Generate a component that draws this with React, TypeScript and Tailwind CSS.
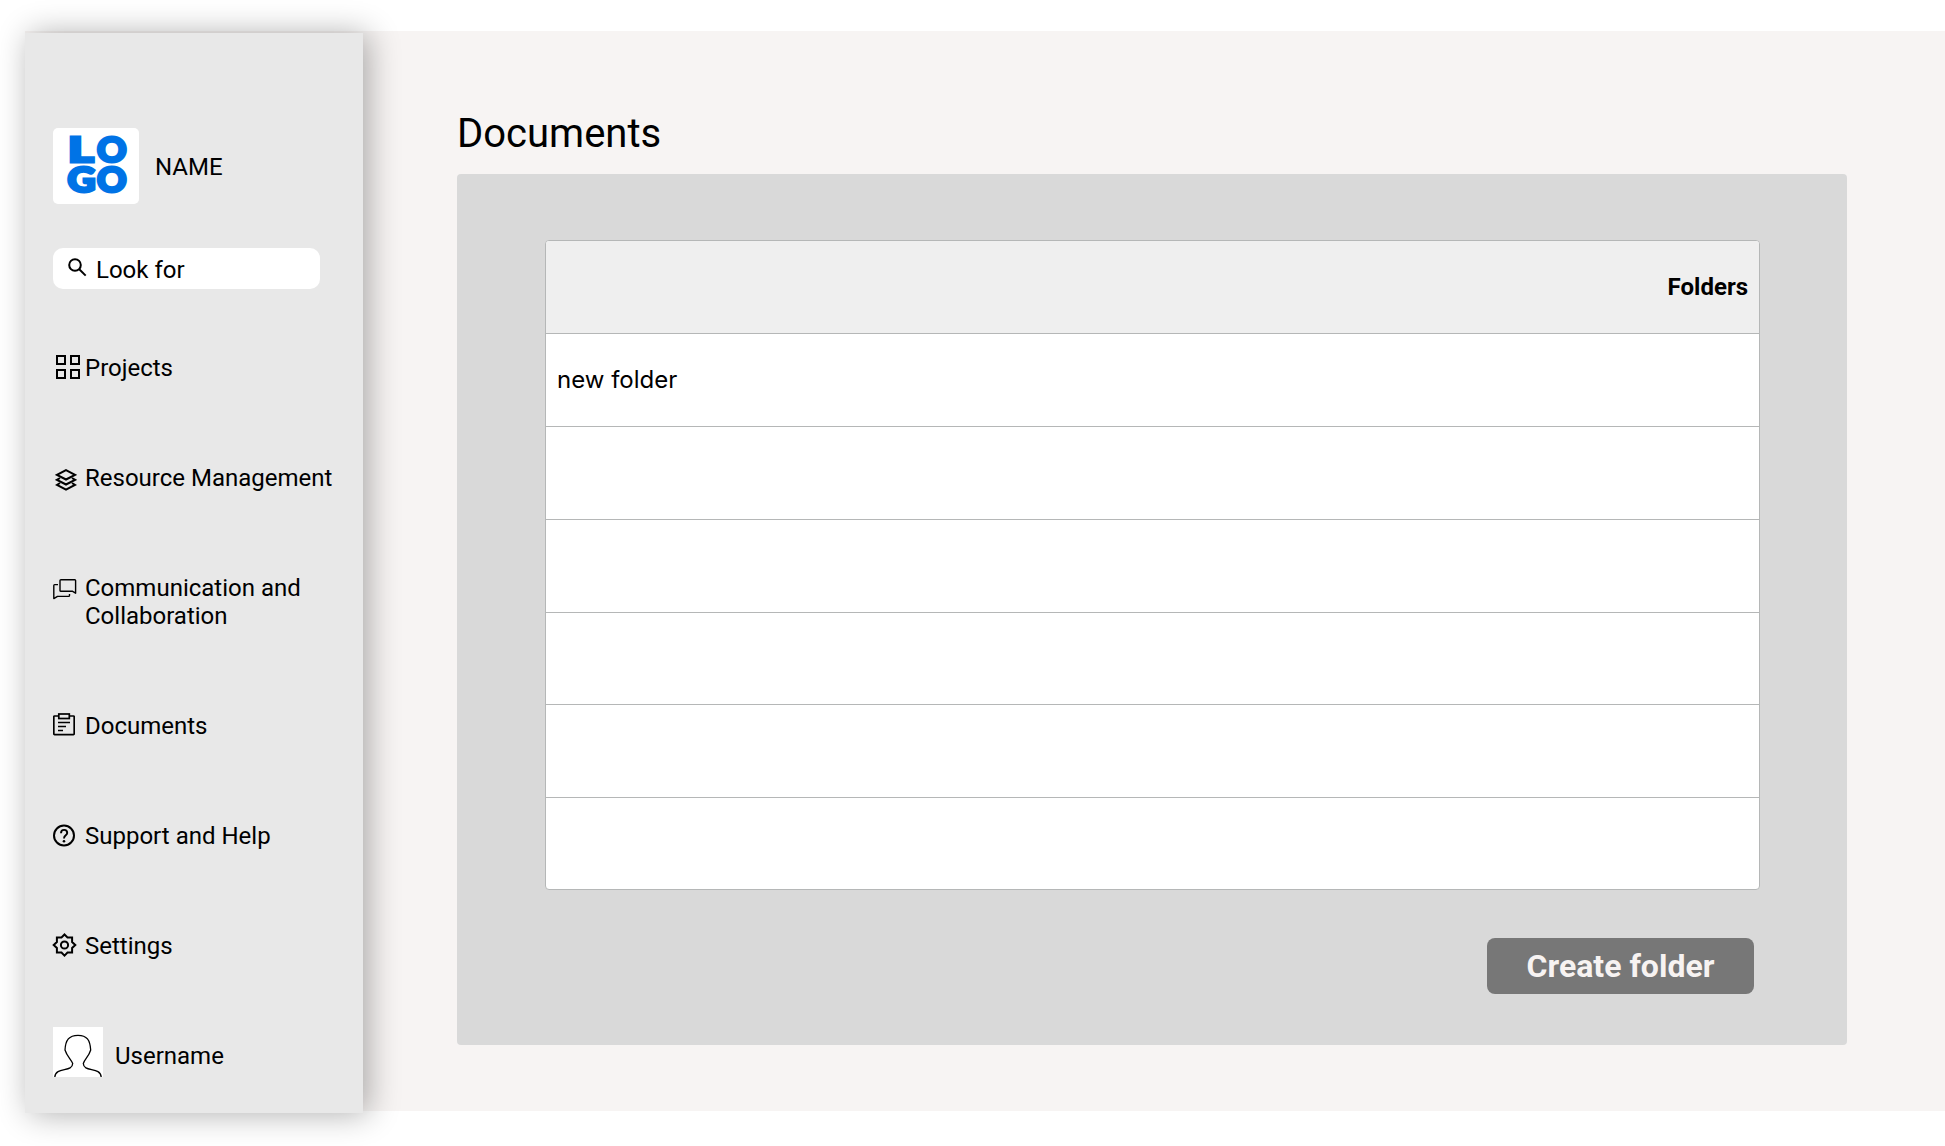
import React from "react";

type IconProps = { className?: string };

const GridIcon = ({ className }: IconProps) => (
  <svg className={className} width="24" height="24" viewBox="0 0 24 24" fill="none" stroke="#000" strokeWidth="2">
    <rect x="1" y="1" width="8" height="8" />
    <rect x="15" y="1" width="8" height="8" />
    <rect x="1" y="15" width="8" height="8" />
    <rect x="15" y="15" width="8" height="8" />
  </svg>
);

const LayersIcon = ({ className }: IconProps) => (
  <svg className={className} width="22" height="22" viewBox="0 0 22 22" fill="none" stroke="#000" strokeWidth="2">
    <path d="M11 1.1 20 5.8 11 10.5 2 5.8Z" />
    <path d="M5 9 2 10.8 11 15.5 20 10.8 17 9" />
    <path d="M5 14 2 15.9 11 20.7 20 15.9 17 14" />
  </svg>
);

const ChatIcon = ({ className }: IconProps) => (
  <svg className={className} width="24" height="21" viewBox="0 0 24 21" fill="none" stroke="#000" strokeWidth="1.4" strokeLinejoin="round">
    <path d="M8 .8H21.8Q22.6 .8 22.6 1.6V14.2L19.2 12.2H8Q7 12.2 7 11.4V1.6Q7 .8 8 .8Z" />
    <path d="M5 5.6H1.6Q.8 5.6 .8 6.4V19.6L4.5 17.4H15.5Q16.5 17.4 16.5 16.4V15" />
  </svg>
);

const ClipboardIcon = ({ className }: IconProps) => (
  <svg className={className} width="22" height="23" viewBox="0 0 22 23" fill="none" stroke="#000" strokeWidth="1.7">
    <path d="M5.5 3H1.5Q.8 3 .8 3.7V20.8Q.8 21.6 1.5 21.6H20.5Q21.2 21.6 21.2 20.8V3.7Q21.2 3 20.5 3H16.5" />
    <rect x="5.8" y="1" width="10.5" height="4.5" />
    <path d="M5 9.5H17M5 13.5H13M5 17.5H10" strokeWidth="1.3" />
  </svg>
);

const HelpIcon = ({ className }: IconProps) => (
  <svg className={className} width="22" height="23" viewBox="0 0 22 23" fill="none" stroke="#000" strokeWidth="2">
    <circle cx="11" cy="11.5" r="10" />
    <path d="M8 9.2C8 4.6 14.2 4.9 14.2 8.9 14.2 11.4 11 11.3 11 14.4" strokeWidth="1.9" />
    <circle cx="11" cy="17.2" r="1.3" fill="#000" stroke="none" />
  </svg>
);

const GearIcon = ({ className }: IconProps) => (
  <svg className={className} width="25" height="24" viewBox="0 0 25 24" fill="none" stroke="#000" strokeWidth="2">
    <path d="M12.5 1.5 15.5 4.4H20.1V9L23.3 12 20.1 15V19.6H15.5L12.5 22.6 9.5 19.6H4.9V15L1.7 12 4.9 9V4.4H9.5Z" />
    <circle cx="12.5" cy="12" r="3.6" />
  </svg>
);

const SearchIcon = ({ className }: IconProps) => (
  <svg className={className} width="19" height="19" viewBox="0 0 19 19" fill="none" stroke="#000" strokeWidth="2">
    <circle cx="7" cy="7" r="5.8" />
    <path d="M11 11 17.7 17.6" />
  </svg>
);

const Avatar = () => (
  <svg className="block bg-white" width="50" height="50" viewBox="0 0 50 50" fill="none" stroke="#000" strokeWidth="1.3">
    <path d="M1.8 50C2.5 39.5 19.5 45.5 19.7 36.5 18 32 14 29.5 12 23 12.5 13 16 8.3 25 8.3S37 13 37.7 23C35.8 29.5 31.8 32 30.3 36.5 30.5 45.5 47.5 39.5 48.2 50" />
  </svg>
);

const Logo = () => (
  <svg
    className="block rounded-[5px] bg-white"
    width="86"
    height="76"
    viewBox="0 0 86 76"
    fill="#0073e6"
    stroke="#0073e6"
    strokeWidth="3"
    fontFamily="Lato"
    fontWeight="900"
    fontSize="34.5"
  >
    <text x="15" y="34" textLength="25.5" lengthAdjust="spacingAndGlyphs">L</text>
    <text x="44" y="34" textLength="29.5" lengthAdjust="spacingAndGlyphs">O</text>
    <text x="14.5" y="64" textLength="28" lengthAdjust="spacingAndGlyphs">G</text>
    <text x="44" y="64" textLength="29.5" lengthAdjust="spacingAndGlyphs">O</text>
  </svg>
);

const navItems = [
  { label: "Projects", Icon: GridIcon, icon: "ml-[3px] mt-[1px]", row: "h-[110px]" },
  { label: "Resource Management", Icon: LayersIcon, icon: "ml-[2px] mt-[5px]", row: "h-[110px]" },
  { label: "Communication and Collaboration", Icon: ChatIcon, icon: "mt-[5px]", row: "h-[138px]" },
  { label: "Documents", Icon: ClipboardIcon, icon: "mt-[1px]", row: "h-[110px]" },
  { label: "Support and Help", Icon: HelpIcon, icon: "mt-[2px]", row: "h-[110px]" },
  { label: "Settings", Icon: GearIcon, icon: "-ml-px mt-[1px]", row: "h-[95px]" },
];

const rows = ["new folder", "", "", "", "", ""];

export default function App() {
  return (
    <div className="h-[1146px] overflow-hidden bg-white pt-[31px] pl-[25px] font-['Roboto',sans-serif] text-2xl leading-7 text-black">
      <div className="flex h-[1080px] bg-[#f7f4f3]">
        <aside className="mt-[2px] h-[1080px] w-[338px] shrink-0 bg-[#e8e8e8] pt-[95px] pl-7 shadow-[5px_1px_30px_0px_rgba(0,0,0,0.32)]">
          <div className="flex items-center gap-4">
            <Logo />
            <span className="mt-[2px]">NAME</span>
          </div>
          <div className="mt-11 flex h-[41px] w-[267px] items-center rounded-[10px] bg-white pl-[15px]">
            <SearchIcon className="-mt-[2px]" />
            <span className="mt-[3px] ml-[9px]">Look for</span>
          </div>
          <nav className="mt-[65px]">
            {navItems.map(({ label, Icon, icon, row }) => (
              <div key={label} className={`flex ${row}`}>
                <div className="w-8 shrink-0">
                  <Icon className={icon} />
                </div>
                <span className="w-[255px]">{label}</span>
              </div>
            ))}
          </nav>
          <div className="flex items-center gap-3">
            <Avatar />
            <span className="mt-[8px]">Username</span>
          </div>
        </aside>
        <main className="pt-[79px] pl-[94px]">
          <h1 className="text-[40px] leading-[47px]">Documents</h1>
          <section className="mt-[17px] h-[871px] w-[1390px] rounded-[4px] bg-[#d9d9d9] pt-[66px] pl-[88px]">
            <div className="flex h-[650px] w-[1215px] flex-col overflow-hidden rounded-[4px] border border-[#b5b7b7] bg-white">
              <div className="flex h-[92px] shrink-0 items-center justify-end bg-[#efefef] pr-[11px] font-bold">Folders</div>
              {rows.map((name, i) => (
                <div key={i} className="flex h-[92.85px] shrink-0 items-center border-t border-[#b5b7b7] pl-[11px] font-['Inter',sans-serif] last:h-auto last:flex-1">
                  {name}
                </div>
              ))}
            </div>
            <button className="mt-12 ml-[942px] block h-14 w-[267px] rounded-lg bg-[#777777] text-[32px] font-bold text-[#f7f3f2]">
              Create folder
            </button>
          </section>
        </main>
      </div>
    </div>
  );
}
